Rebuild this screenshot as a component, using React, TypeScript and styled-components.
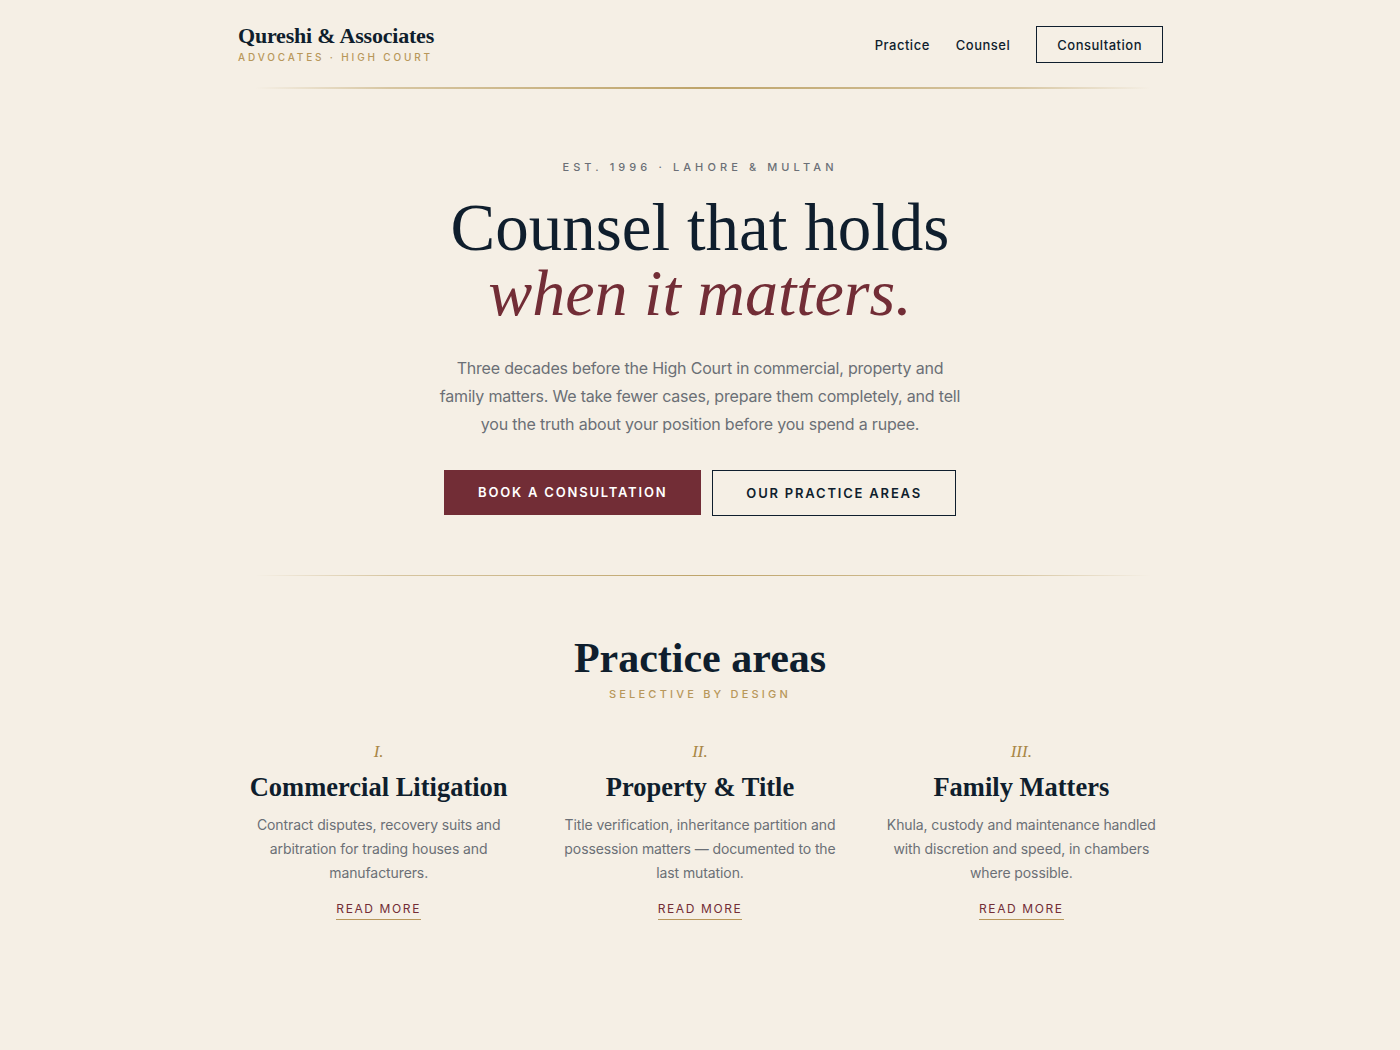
import React from 'react';
import styled, { createGlobalStyle } from 'styled-components';

const navy = '#0f1e2d';
const maroon = '#722d36';
const gold = '#b8975a';
const muted = '#6b6f76';
const serif = '"Liberation Serif", "DejaVu Serif", serif';
const sans = 'Inter, "Noto Sans", sans-serif';

const GlobalStyle = createGlobalStyle`
  * { box-sizing: border-box; }
  html, body {
    margin: 0;
    padding: 0;
    background: #f5efe5;
    color: ${navy};
    font-family: ${sans};
  }
`;

interface IPractice {
  numeral: string;
  title: string;
  text: string;
}

const practices: IPractice[] = [
  {
    numeral: 'I.',
    title: 'Commercial Litigation',
    text: 'Contract disputes, recovery suits and arbitration for trading houses and manufacturers.',
  },
  {
    numeral: 'II.',
    title: 'Property & Title',
    text: 'Title verification, inheritance partition and possession matters — documented to the last mutation.',
  },
  {
    numeral: 'III.',
    title: 'Family Matters',
    text: 'Khula, custody and maintenance handled with discretion and speed, in chambers where possible.',
  },
];

const App = () => {
  return (
    <>
      <GlobalStyle />
      <Page>
        <Header>
          <Brand>
            <BrandName>Qureshi &amp; Associates</BrandName>
            <BrandTag>Advocates · High Court</BrandTag>
          </Brand>
          <Nav>
            <NavLink href="#practice">Practice</NavLink>
            <NavLink href="#counsel">Counsel</NavLink>
            <NavButton href="#consultation">Consultation</NavButton>
          </Nav>
        </Header>
        <Rule />
        <Hero>
          <Eyebrow>Est. 1996 · Lahore &amp; Multan</Eyebrow>
          <Headline>
            <Line>Counsel that holds</Line>
            <Accent>when it matters.</Accent>
          </Headline>
          <Lead>
            Three decades before the High Court in commercial, property and family matters. We take fewer cases,
            prepare them completely, and tell you the truth about your position before you spend a rupee.
          </Lead>
          <Actions>
            <PrimaryButton href="#book">Book a consultation</PrimaryButton>
            <OutlineButton href="#areas">Our practice areas</OutlineButton>
          </Actions>
        </Hero>
        <Rule />
        <Section>
          <SectionTitle>Practice areas</SectionTitle>
          <SectionTag>Selective by design</SectionTag>
          <Grid>
            {practices.map((p) => (
              <Card key={p.title}>
                <Numeral>{p.numeral}</Numeral>
                <CardTitle>{p.title}</CardTitle>
                <CardText>{p.text}</CardText>
                <ReadMore href="#more">Read more</ReadMore>
              </Card>
            ))}
          </Grid>
        </Section>
      </Page>
    </>
  );
};

const Page = styled.div`
  width: 926px;
  margin: 0 auto;
  padding-bottom: 120px;
`;

const Header = styled.header`
  display: flex;
  justify-content: space-between;
  align-items: center;
  padding: 24px 0 24px;
`;

const Brand = styled.div`
  display: flex;
  flex-direction: column;
  gap: 3px;
  padding-left: 1px;
`;

const BrandName = styled.div`
  font-family: ${serif};
  font-weight: 700;
  font-size: 22px;
  line-height: 24px;
  color: ${navy};
  letter-spacing: -0.2px;
`;

const BrandTag = styled.div`
  font-size: 10px;
  line-height: 12px;
  letter-spacing: 2.85px;
  text-transform: uppercase;
  color: ${gold};
  font-weight: 500;
`;

const Nav = styled.nav`
  display: flex;
  align-items: center;
  gap: 26px;
  margin-top: 2px;
`;

const NavLink = styled.a`
  font-size: 13px;
  font-weight: 500;
  letter-spacing: 0.5px;
  color: ${navy};
  text-decoration: none;
`;

const NavButton = styled(NavLink)`
  border: 1.5px solid ${navy};
  padding: 9.5px 20px;
  line-height: 16px;
`;

const Rule = styled.div`
  height: 1.5px;
  margin: 0 12px 0 18px;
  background: linear-gradient(
    90deg,
    rgba(190, 164, 106, 0) 0%,
    rgba(190, 164, 106, 0.55) 15%,
    rgba(190, 164, 106, 1) 50%,
    rgba(190, 164, 106, 0.55) 85%,
    rgba(190, 164, 106, 0) 100%
  );
`;

const Hero = styled.section`
  display: flex;
  flex-direction: column;
  align-items: center;
  text-align: center;
  padding: 70px 0 59px;
`;

const Eyebrow = styled.div`
  font-size: 11px;
  line-height: 16px;
  letter-spacing: 4.1px;
  text-transform: uppercase;
  color: ${muted};
  font-weight: 500;
`;

const Headline = styled.h1`
  margin: 22px 0 0;
  font-family: ${serif};
  font-weight: 400;
  color: ${navy};
  display: flex;
  flex-direction: column;
  align-items: center;
`;

const Line = styled.span`
  display: block;
  font-size: 67px;
  line-height: 60px;
`;

const Accent = styled(Line)`
  margin-top: 6px;
  font-style: italic;
  color: ${maroon};
  font-size: 66px;
`;

const Lead = styled.p`
  margin: 31px 0 0;
  max-width: 528px;
  font-size: 16px;
  line-height: 28px;
  letter-spacing: -0.2px;
  color: ${muted};
`;

const Actions = styled.div`
  display: flex;
  gap: 11px;
  margin-top: 32px;
`;

const PrimaryButton = styled.a`
  display: inline-flex;
  align-items: center;
  justify-content: center;
  height: 45px;
  padding: 0 33px;
  background: ${maroon};
  color: #fff;
  font-size: 13px;
  font-weight: 600;
  letter-spacing: 1.8px;
  text-transform: uppercase;
  text-decoration: none;
  border: 1.5px solid ${maroon};
`;

const OutlineButton = styled(PrimaryButton)`
  background: transparent;
  color: ${navy};
  border-color: ${navy};
  height: 46px;
  padding: 0 33px;
`;

const Section = styled.section`
  display: flex;
  flex-direction: column;
  align-items: center;
  padding-top: 59px;
`;

const SectionTitle = styled.h2`
  margin: 0;
  font-family: ${serif};
  font-weight: 700;
  font-size: 42px;
  line-height: 46px;
  color: ${navy};
`;

const SectionTag = styled.div`
  margin-top: 5px;
  font-size: 11px;
  line-height: 16px;
  letter-spacing: 3.2px;
  text-transform: uppercase;
  color: ${gold};
  font-weight: 500;
`;

const Grid = styled.div`
  display: grid;
  grid-template-columns: repeat(3, 1fr);
  gap: 38px;
  width: 100%;
  margin-top: 40px;
`;

const Card = styled.article`
  display: flex;
  flex-direction: column;
  align-items: center;
  text-align: center;
`;

const Numeral = styled.div`
  font-family: ${serif};
  font-style: italic;
  font-size: 17px;
  line-height: 20px;
  color: #a98746;
`;

const CardTitle = styled.h3`
  margin: 9px 0 0;
  font-family: ${serif};
  font-weight: 700;
  font-size: 26.5px;
  line-height: 32px;
  color: ${navy};
  white-space: nowrap;
`;

const CardText = styled.p`
  margin: 10px 0 0;
  font-size: 14px;
  line-height: 24px;
  letter-spacing: -0.1px;
  color: ${muted};
`;

const ReadMore = styled.a`
  margin-top: 16px;
  padding-bottom: 2px;
  border-bottom: 1px solid ${gold};
  font-size: 12px;
  line-height: 16px;
  letter-spacing: 1.6px;
  text-transform: uppercase;
  color: ${maroon};
  text-decoration: none;
  font-weight: 400;
`;

export default App;
